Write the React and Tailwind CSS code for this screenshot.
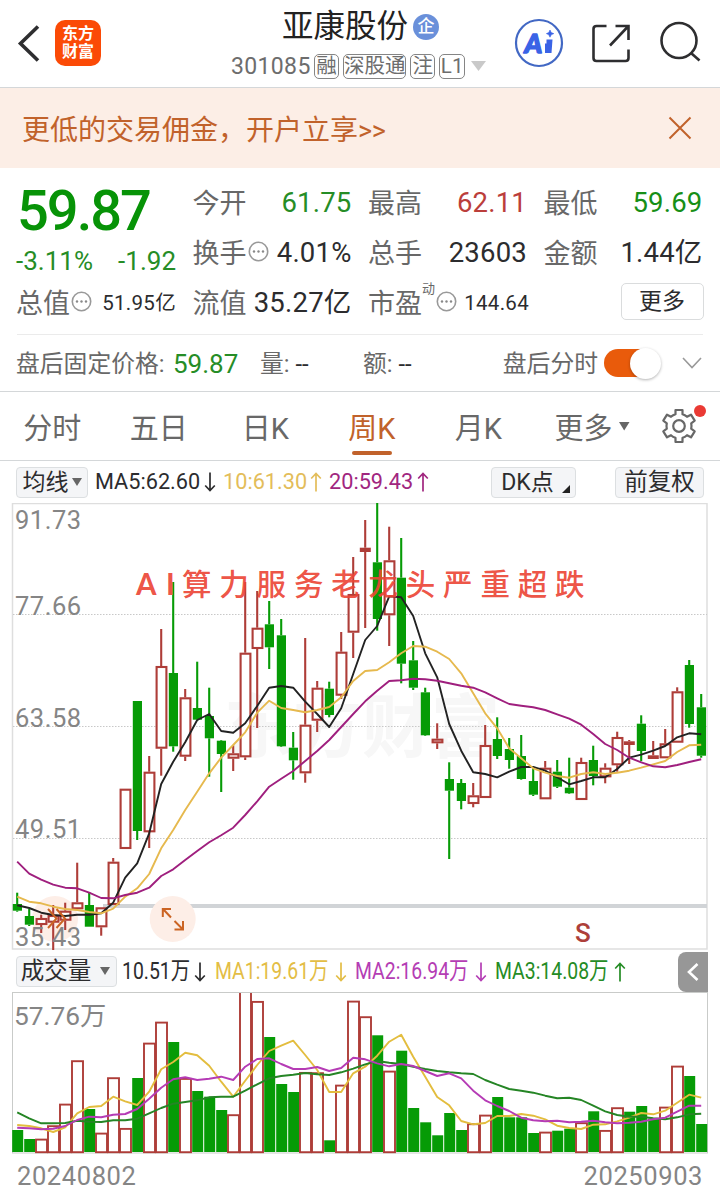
import React, { useState } from "react";
import clsx from "clsx";

// [type, high, body top, body bottom, low], all in chart units
const candles = [
    ["g", 892.7, 904, 910.7, 911.7], ["g", 909, 916, 924.7, 926], ["r", 914.7, 918, 925, 933], ["r", 905, 915, 922.7, 950],
    ["r", 902.7, 910.7, 920.7, 930], ["r", 862.7, 902.3, 909.3, 909.3], ["g", 892, 905, 926.7, 926.7], ["r", 907.3, 907.3, 927.3, 935.7],
    ["r", 858, 861.7, 905, 905], ["r", 788.7, 788.7, 849, 849], ["g", 701, 701, 831, 840], ["r", 756, 771.7, 832.3, 848],
    ["r", 629, 666, 748.7, 775.7], ["g", 582, 673, 746.3, 751.7], ["r", 689, 697.3, 756.7, 761], ["g", 661.7, 708, 719.7, 721],
    ["g", 687.7, 716, 738.3, 776.7], ["g", 740, 740.7, 754, 792], ["r", 745.3, 753.3, 758.7, 771], ["r", 582, 652.7, 757.3, 760],
    ["r", 591, 627.7, 649, 728], ["g", 601, 624.3, 647.3, 669], ["g", 619, 635.3, 746.3, 747], ["g", 732, 747.7, 760.3, 779.7],
    ["r", 638, 724.7, 773.3, 782.7], ["r", 681, 687.7, 720.7, 732], ["g", 681.7, 688.7, 715, 717.3], ["r", 632, 651.7, 695.7, 699],
    ["r", 557, 594, 632.7, 658], ["r", 520, 547.7, 552, 628], ["g", 503, 562.3, 619, 630.7], ["r", 526.7, 560.3, 615.3, 646],
    ["g", 538, 577.7, 663.7, 683.3], ["g", 641, 660.3, 687.7, 690], ["g", 687.7, 692.3, 735.3, 736], ["r", 723.3, 738.7, 743.3, 749],
    ["g", 762.3, 779, 790.7, 859], ["g", 779, 783, 801, 809.3], ["r", 783, 795.3, 804, 807.3], ["r", 725, 745, 798, 798],
    ["g", 717.3, 739, 756, 759], ["g", 738, 749, 760, 768.7], ["g", 735, 756, 779, 779.7], ["g", 766.7, 781, 794.7, 796],
    ["r", 761, 767.7, 799.3, 799.3], ["g", 760, 771.7, 786.7, 788], ["g", 757.7, 787.7, 793.3, 794], ["r", 757.7, 762, 800, 800],
    ["g", 745.7, 760, 776, 785.3], ["r", 763.3, 767.7, 777.3, 783.3], ["r", 731.7, 737, 765.3, 771.7], ["r", 740, 741.3, 745, 764],
    ["g", 715.3, 723.7, 751, 761.3], ["r", 741, 755.3, 759, 759], ["r", 729, 743.3, 758.3, 758.3], ["r", 687.3, 691.3, 742.7, 742.7],
    ["g", 660, 665, 724, 727.7], ["g", 694, 707.3, 755.7, 757.7],
];

const ma5 = [905.3, 908, 912.7, 915, 916, 914.7, 914.7, 913.3, 902.7, 877.7, 863.3, 833.3, 784, 761.7, 742.3, 720, 714, 731, 732.7, 723.3, 706, 687.7, 686, 687.7, 701.7, 714, 727, 708.3, 674, 640, 626, 596.3, 597.3, 616, 653.3, 677.3, 724, 750.7, 772.3, 774, 777.3, 771.7, 767, 767, 770.7, 777.3, 784.3, 781, 777.3, 777.3, 769, 757.7, 754.7, 750.7, 746, 737.3, 733.3, 734.3];
const ma10 = [896.7, 901.7, 903.3, 906.7, 909, 910, 912, 913.3, 908.7, 896.7, 888.3, 874, 848.3, 830, 810, 791.7, 773.3, 757.7, 745, 732.3, 712.7, 700.7, 708, 710, 712.3, 710, 707, 697.3, 681, 671, 670, 662.3, 653.3, 646, 646.7, 651.7, 659, 673.3, 693.3, 713.3, 728.3, 748.3, 758.3, 768.3, 772.7, 776, 777.7, 774, 772.3, 774, 772.7, 770.7, 767.7, 764.3, 761, 752, 745.3, 744.7];
const ma20 = [861.7, 873.7, 879.7, 884.7, 887.7, 888.3, 892.7, 898, 898.3, 895, 892.7, 887.7, 876, 869.3, 860, 851, 842.3, 835.3, 827.7, 815, 801.3, 786.7, 778.7, 771, 761, 751, 740, 727, 714, 701.3, 690.7, 681, 680.3, 678.7, 679.3, 680.7, 683.3, 685.7, 687.7, 692.3, 698.3, 704, 705.7, 707.3, 710, 714.3, 718.7, 724.7, 734, 744, 750, 757.7, 762.3, 766.3, 767.3, 765, 762, 759.3];

const volumes = [1130, 1139, 1138.7, 1125.3, 1103.7, 1060.3, 1109, 1132.7, 1077.3, 1128, 1078, 1042.7, 1021.7, 1042, 1078, 1091, 1096.7, 1110, 1114.3, 985, 1001, 1037, 1084, 1092, 1072, 1072.3, 1140.3, 1084.7, 1000.7, 1016.3, 1035.3, 1070.7, 1050.7, 1108, 1122.3, 1135.3, 1113, 1130, 1123.3, 1114.7, 1097, 1117.3, 1117.3, 1133, 1131.7, 1130.7, 1128.7, 1122.3, 1111.3, 1130, 1107.3, 1111.7, 1106, 1118.7, 1106.7, 1065.7, 1076, 1124];
// volume colours do not always follow the candle
const volTypes = "ggrrrrgrrrgrrgrgggrrrgggrrgrrrgrggggggrrggggrggrgrrgggrrgg";
const vol1 = [1125, 1126, 1128.3, 1132, 1127.3, 1113.3, 1107, 1106, 1096.7, 1101.3, 1105, 1091.7, 1069.3, 1062, 1052.7, 1055.3, 1065.7, 1081.7, 1096.7, 1080.7, 1065, 1051, 1045.7, 1040.7, 1055, 1070, 1092, 1092, 1073.3, 1066.7, 1055.7, 1041.7, 1034.7, 1056.7, 1076.7, 1097, 1105.3, 1121, 1124.3, 1123, 1116, 1116, 1114, 1115.7, 1119.3, 1125.7, 1128, 1129, 1124.7, 1124.3, 1121.3, 1117.7, 1113, 1114.3, 1110.7, 1102.7, 1094.7, 1097.7];
const vol2 = [1127.7, 1128.3, 1129.3, 1128.7, 1126, 1120, 1116.7, 1117.3, 1114.7, 1114, 1109, 1098.7, 1087.7, 1079.3, 1077.3, 1080, 1078.7, 1076.7, 1080, 1066.7, 1059, 1058.3, 1064, 1069, 1069, 1067, 1071, 1068, 1057.7, 1059.3, 1063.3, 1066.3, 1064, 1066, 1071, 1076, 1073.3, 1078.3, 1090.7, 1100.3, 1106, 1111, 1117.7, 1120.3, 1121.3, 1120.7, 1122.3, 1121.7, 1120.7, 1122.3, 1123.3, 1122.7, 1121.7, 1119.3, 1117.7, 1111.7, 1105.7, 1105.7];
const vol3 = [1112.3, 1118.3, 1123.3, 1123.3, 1123, 1120.7, 1121.7, 1122, 1120.3, 1120.3, 1118.7, 1113.3, 1108, 1103.7, 1102, 1100.3, 1097.3, 1096.7, 1096.7, 1090.7, 1084.3, 1078.3, 1076, 1074.7, 1073, 1074.3, 1075, 1072.3, 1068.7, 1064.3, 1061, 1062.7, 1064, 1066.7, 1069, 1071, 1072.3, 1073.3, 1074, 1080, 1084.7, 1089, 1090.7, 1092.7, 1095.7, 1098.3, 1097.7, 1100, 1105.7, 1111.3, 1115, 1116.7, 1116.7, 1118.3, 1119.3, 1117.3, 1114.3, 1113.7];

const RED = "#ae3d38";
const GREEN = "#069b06";

const cx = (i) => 17.2 + i * 12;
const toPoints = (list) => list.map((y, i) => `${cx(i)},${y}`).join(" ");

function Line({ data, color }) {
    return <polyline points={toPoints(data)} fill="none" stroke={color} strokeWidth="1.9" strokeLinejoin="round" />;
}

function Arrow({ up }) {
    return (
        <svg width="12" height="20" viewBox="0 0 12 20" fill="none" stroke="currentColor" strokeWidth="1.7" className={clsx("shrink-0", up && "rotate-180")}>
            <path d="M6 0.500V18.500M1.200 13.500L6 18.500L10.800 13.500" />
        </svg>
    );
}

function Dots() {
    return (
        <svg width="21" height="21" viewBox="0 0 21 21" className="shrink-0 relative -top-0.5 ml-px">
            <circle cx="10.5" cy="10.5" r="9.2" fill="none" stroke="#999" strokeWidth="1.6" />
            <circle cx="6" cy="10.5" r="1.2" fill="#888" />
            <circle cx="10.5" cy="10.5" r="1.2" fill="#888" />
            <circle cx="15" cy="10.5" r="1.2" fill="#888" />
        </svg>
    );
}

function Header() {
    return (
        <header className="h-[88px] border-b border-[#d4d7d9] flex items-center">
            <svg width="24" height="40" viewBox="0 0 24 40" className="ml-4 shrink-0" fill="none" stroke="#2e2e30" strokeWidth="3.6">
                <path d="M22 2.500L4.500 19.500L22 36.500" />
            </svg>
            <div className="ml-[15px] w-[46px] h-[46px] rounded-[10px] bg-[#fb4a06] text-white font-bold text-base leading-[18px] flex flex-col items-center justify-center shrink-0 mb-0.5">
                <span>东方</span>
                <span>财富</span>
            </div>
            <div className="ml-[130px] w-[256px] h-full pt-[5px] shrink-0 flex flex-col">
                <div className="h-[43px] pl-[51px] flex items-center gap-[5px] text-[31.5px] text-[#222]">
                    <span className="leading-none whitespace-nowrap">亚康股份</span>
                    <span className="w-[26px] h-[26px] rounded-full bg-[#6a90da] text-white font-medium text-[17px] leading-none flex items-center justify-center">企</span>
                </div>
                <div className="h-[26px] mt-[5px] flex items-center gap-1 text-[#6d6d6d]">
                    <span className="text-[23px] leading-none tracking-[0.35px] w-[79px]">301085</span>
                    {["融", "深股通", "注", "L1"].map((tag) => (
                        <span key={tag} className="h-[25px] min-w-[25px] px-px border border-[#858585] rounded-[5px] text-[20.5px] leading-none flex items-center justify-center whitespace-nowrap">{tag}</span>
                    ))}
                    <svg width="16" height="11" className="ml-0.5 shrink-0"><path d="M0 0H15L7.500 10Z" fill="#c9c9c9" /></svg>
                </div>
            </div>
            <svg width="50" height="50" viewBox="0 0 50 50" className="ml-[27px] mb-px shrink-0">
                <circle cx="25" cy="25" r="23" fill="#fff" stroke="#4268c4" strokeWidth="2.2" />
                <text x="10.500" y="34.500" fontSize="27" fontWeight="900" fontStyle="italic" fill="#3a63e6" stroke="#3a63e6" strokeWidth="1.4" strokeLinejoin="round" fontFamily="Lato">A</text>
                <path d="M32.500 21.500H38.500L37.500 35H31V25.500H32.500Z" fill="#3a63e6" />
                <path d="M36 12L37.2 14.600L39.800 15.600L37.200 16.800L36 19.200L34.800 16.800L32.400 15.600L34.800 14.600Z" fill="#3a63e6" stroke="#3a63e6" strokeWidth="0.600" />
            </svg>
            <svg width="42" height="42" viewBox="0 0 42 42" className="ml-[26px] mb-0.5 shrink-0" fill="none" stroke="#2e2e30" strokeWidth="2.6">
                <path d="M16.5 4H6.5Q3.5 4 3.5 7V36Q3.5 39 6.5 39H35.5Q38.5 39 38.5 36V27.500" />
                <path d="M25.500 4H38.500V18M38 4.500L20 23.500" />
            </svg>
            <svg width="44" height="44" viewBox="0 0 44 44" className="ml-[26px] mb-1 shrink-0" fill="none" stroke="#2e2e30" strokeWidth="2.6">
                <circle cx="21" cy="20.500" r="17.500" />
                <path d="M33 33L41.500 40.500" />
            </svg>
        </header>
    );
}

function Banner() {
    return (
        <div className="h-20 bg-[#fceee6] pl-[22px] pr-[28px] pt-1 flex items-center justify-between text-[#c1622b]">
            <span className="text-[28px] leading-none whitespace-nowrap relative top-px">更低的交易佣金，开户立享<span className="tracking-[-0.5px] text-[27px]">&gt;&gt;</span></span>
            <svg width="24" height="24" viewBox="0 0 24 24" className="mb-1" stroke="currentColor" strokeWidth="2"><path d="M1.500 1.500L22.500 22.500M22.500 1.500L1.500 22.500" /></svg>
        </div>
    );
}

function Stat({ label, value, color, small, icon, sup }) {
    return (
        <div className="flex items-center whitespace-nowrap text-[27px] leading-none text-[#686868]">
            <span className="-ml-px pt-0.5">{label}</span>
            {sup && <span className="text-[13px] self-start mt-1">{sup}</span>}
            {icon && <Dots />}
            <span className={clsx("ml-auto", small ? "text-[20.5px] tracking-[0.3px]" : "text-[27.500px] tracking-[0.200px]", sup && "-mr-0.5", color || "text-[#2c2c2e]")}>{value}</span>
        </div>
    );
}

function Quote() {
    return (
        <section className="mx-[17px] h-[167px] pt-[10px] border-b border-[#ebebeb] grid grid-cols-[159px_158px_158px_158px] grid-rows-[50px_50px_50px] gap-x-[17.5px]">
            <div className="row-span-2 flex flex-col text-[#079307]">
                <span className="text-[56px] font-medium leading-[66px] tracking-[-2px]">59.87</span>
                <div className="flex justify-between text-[26px] leading-[34px] -ml-px">
                    <span className="text-[#268d26]">-3.11%</span>
                    <span className="text-[#268d26]">-1.92</span>
                </div>
            </div>
            <Stat label="今开" value="61.75" color="text-[#268d26]" />
            <Stat label="最高" value="62.11" color="text-[#bb3e3b]" />
            <Stat label="最低" value="59.69" color="text-[#178f17]" />
            <Stat label="换手" value="4.01%" icon />
            <Stat label="总手" value="23603" />
            <Stat label="金额" value="1.44亿" />
            <Stat label="总值" value="51.95亿" icon small />
            <Stat label="流值" value="35.27亿" />
            <Stat label="市盈" value="144.64" sup="动" icon small />
            <button className="ml-auto -mr-px self-center relative -top-0.5 w-[83px] h-[37px] border border-[#dadcdd] rounded-[5px] text-[23px] leading-none text-[#2c2c2e]">更多</button>
        </section>
    );
}

function AfterHours() {
    const [on, setOn] = useState(true);
    return (
        <div className="h-[57px] pl-4 pr-[18px] border-b border-[#d4d7d9] flex items-center text-[23.800px] leading-none text-[#686868] whitespace-nowrap">
            <span className="w-[157px] pt-1">盘后固定价格:</span>
            <span className="w-[87px] pt-0.5 text-[26px] text-[#268d26]">59.87</span>
            <span className="w-[103px] pt-1">量: <span className="text-[#2c2c2e]">--</span></span>
            <span className="pt-1">额: <span className="text-[#2c2c2e]">--</span></span>
            <span className="ml-auto pt-1">盘后分时</span>
            <button
                className={clsx("ml-1.5 w-[56px] h-[28px] rounded-full flex items-center", on ? "bg-[#e95b0b] justify-end" : "bg-gray-300")}
                onClick={() => setOn(!on)}
            >
                <span className="w-[31px] h-[31px] rounded-full bg-white shadow-[0_1px_3px_rgba(0,0,0,0.3)] -mr-px"></span>
            </button>
            <svg width="20" height="12" viewBox="0 0 20 12" className="ml-[22px]" fill="none" stroke="#999" strokeWidth="1.6"><path d="M1 1L10 10.500L19 1" /></svg>
        </div>
    );
}

function Tabs() {
    const [tab, setTab] = useState("周K");
    return (
        <nav className="h-[69px] border-b border-[#d4d7d9] flex items-center text-[29px] leading-none text-[#686868]">
            {["分时", "五日", "日K", "周K", "月K"].map((name) => (
                <button
                    key={name}
                    className={clsx("w-[106.5px] h-full pt-[23px] pr-0.5 flex flex-col items-center", tab === name && "text-[#c1622b]")}
                    onClick={() => setTab(name)}
                >
                    <span>{name}</span>
                    {tab === name && <span className="mt-[7px] w-10 h-1 rounded-full bg-[#c1622b]"></span>}
                </button>
            ))}
            <span className="ml-[22px] pt-1.5">更多</span>
            <svg width="11" height="9" className="ml-1.5"><path d="M0 0H10.500L5.200 8.500Z" fill="#666" /></svg>
            <div className="ml-[31px] relative">
                <svg width="36" height="36" viewBox="0 0 36 36" fill="none" stroke="#686868" strokeWidth="2.2" strokeLinejoin="round">
                    <path d="M14.500 2H21.500V6.300Q24 7 26 8.800L30 6.700L33.700 12.700L30.200 15.300Q30.800 18 30.200 20.700L33.700 23.300L30 29.300L26 27.200Q24 29 21.500 29.700V34H14.500V29.700Q12 29 10 27.200L6 29.300L2.300 23.300L5.800 20.700Q5.200 18 5.800 15.300L2.300 12.700L6 6.700L10 8.800Q12 7 14.500 6.300Z" />
                    <circle cx="18" cy="18" r="5.800" />
                </svg>
                <span className="absolute -top-[3px] left-[33px] w-3 h-3 rounded-full bg-[#ea3a34]"></span>
            </div>
        </nav>
    );
}

function MaBar() {
    return (
        <div className="h-[42px] pl-4 pr-4 flex items-center text-[21.700px] leading-none text-[#2c2c2e] whitespace-nowrap">
            <button className="w-[72px] h-[31px] border border-[#dcdfe1] rounded bg-[#f4f5f7] text-[23px] leading-none flex items-center justify-center gap-[3px]">
                <span className="pt-px">均线</span>
                <svg width="10" height="9"><path d="M0 0H10L5 8Z" fill="#666" /></svg>
            </button>
            <span className="ml-[7px] w-[109px]">MA5:62.60</span>
            <Arrow />
            <span className="ml-[7px] w-[87px] text-[#e3bd5a]">10:61.30</span>
            <span className="text-[#e3bd5a]"><Arrow up /></span>
            <span className="ml-[7px] w-[88px] text-[#a1267f]">20:59.43</span>
            <span className="text-[#a1267f]"><Arrow up /></span>
            <button className="ml-auto w-[85px] h-[31px] border border-[#dcdfe1] rounded bg-[#f4f5f7] text-[23px] leading-none flex items-center justify-center gap-2 pl-1">
                <span className="pt-px">DK点</span>
                <svg width="8" height="8" className="mt-3.5"><path d="M8 0V8H0Z" fill="#222" /></svg>
            </button>
            <button className="ml-[39px] w-[89px] h-[31px] pt-0.5 border border-[#dcdfe1] rounded bg-[#f4f5f7] text-[23.500px] leading-none">前复权</button>
        </div>
    );
}

function Candle({ item, x }) {
    const [type, high, top, bottom, low] = item;
    const color = type === "r" ? RED : GREEN;
    const hollow = type === "r" && bottom - top > 4.5;
    return (
        <g stroke={color} strokeWidth="2.1">
            {high < top && <path d={`M${x} ${high}V${top}`} />}
            {low > bottom && <path d={`M${x} ${bottom}V${low}`} />}
            {hollow
                ? <rect x={x - 4.6} y={top + 1} width="9.800" height={bottom - top - 2} fill="#fff" />
                : <rect x={x - (type === "r" ? 5.4 : 4.4)} y={top} width={type === "r" ? 11 : 9.2} height={bottom - top} fill={color} stroke="none" />}
        </g>
    );
}

function PriceChart() {
    return (
        <svg width="720" height="448" viewBox="0 503 720 448" className="block">
            <g fill="#f7f7f7" fontWeight="700" fontSize="69">
                <text x="224" y="752">东方财富</text>
            </g>
            <rect x="12.500" y="503.500" width="694.500" height="445.500" fill="none" stroke="#dedede" strokeWidth="1.500" />
            {[614.5, 726.5, 838.5].map((y) => (
                <path key={y} d={`M13 ${y}H707`} stroke="#c8c8c8" strokeDasharray="1.500 1.500" />
            ))}
            <path d="M103 906H707" stroke="#d1d4d7" strokeWidth="4" />
            <circle cx="55" cy="919" r="23" fill="#fdeee7" />
            <circle cx="172.700" cy="919" r="23" fill="#fdeee7" />
            {candles.map((item, i) => <Candle key={i} item={item} x={cx(i)} />)}
            <Line data={ma5} color="#222" />
            <Line data={ma10} color="#e6b94e" />
            <Line data={ma20} color="#9f1f7e" />
            <g fill="none" stroke="#cb6424" strokeWidth="2">
                <path d="M48 909L56.500 918.500L48 928M56.500 909L65 918.500L56.500 928" />
                <path d="M162.800 917V909H171M163 909L171 917.500M174.500 929.500H183V921M183 929.500L174.500 921" />
            </g>
            <g fill="#858585" fontSize="25.500" letterSpacing="0.500">
                <text x="15" y="529">91.73</text>
                <text x="15" y="615">77.66</text>
                <text x="15" y="727">63.58</text>
                <text x="15" y="838">49.51</text>
                <text x="15" y="946">35.43</text>
            </g>
            <text x="575" y="942" fontSize="26" fontWeight="500" fill="#ad3f3a">S</text>
            <g fill="#ec4536" fillOpacity="0.930" fontSize="29.500" fontWeight="500">
                <text x="136" y="594.500" letterSpacing="9.500" fontWeight="700" fontFamily="Lato">AI</text>
                <text x="182" y="594.500" letterSpacing="7.800">算力服务老龙头严重超跌</text>
            </g>
        </svg>
    );
}

function VolItem({ text, up, className }) {
    return (
        <div className={clsx("flex items-center shrink-0", className)}>
            <span className="grow w-0"><span className="inline-block origin-left scale-x-[0.825]">{text}</span></span>
            <Arrow up={up} />
        </div>
    );
}

function VolumeBar() {
    return (
        <div className="h-[41px] pl-4 pr-3 flex items-center text-[23.500px] leading-none text-[#2c2c2e] whitespace-nowrap">
            <button className="w-[101px] h-[31px] border border-[#dcdfe1] rounded bg-[#f4f5f7] text-[23.500px] leading-none flex items-center justify-center gap-[9px] pr-0.5">
                <span className="pt-px">成交量</span>
                <svg width="10" height="9"><path d="M0 0H10L5 8Z" fill="#666" /></svg>
            </button>
            <VolItem text="10.51万" className="ml-[5px] w-[84px]" />
            <VolItem text="MA1:19.61万" className="ml-[9px] w-[132px] text-[#e3bd45]" />
            <VolItem text="MA2:16.94万" className="ml-2 w-[132px] text-[#b43db4]" />
            <VolItem text="MA3:14.08万" up className="ml-2 w-[131px] text-[#258c25]" />
            <button className="ml-auto w-[30px] h-10 rounded-l-lg bg-[#979797] flex items-center justify-center">
                <svg width="12" height="18" viewBox="0 0 12 18" fill="none" stroke="#fff" strokeWidth="2.600"><path d="M10.500 1L2 9L10.500 17" /></svg>
            </button>
        </div>
    );
}

function VolumeChart() {
    return (
        <svg width="720" height="163" viewBox="0 992 720 163" className="block">
            <defs>
                <clipPath id="vol"><rect x="12" y="993" width="697" height="161" /></clipPath>
            </defs>
            <rect x="12.500" y="992.500" width="695" height="160.500" fill="none" stroke="#c9cbc9" />
            <g clipPath="url(#vol)">
                {volumes.map((y, i) => volTypes[i] === "r"
                    ? <rect key={i} x={cx(i) - 5.2} y={y + 0.9} width="11" height={1151.3 - y} fill="#fff" stroke={RED} strokeWidth="1.900" />
                    : <rect key={i} x={cx(i) - 5} y={y} width="11" height={1152 - y} fill={GREEN} />
                )}
                <Line data={vol1} color="#e3bd3e" />
                <Line data={vol3} color="#258525" />
                <Line data={vol2} color="#b53bb5" />
            </g>
            <text x="14" y="1025" fontSize="26.300" fill="#858585">57.76万</text>
        </svg>
    );
}

function App() {
    return (
        <div className="w-[720px] h-[1203px] overflow-hidden bg-white font-['Roboto','Noto_Sans_CJK_SC',sans-serif]">
            <Header />
            <Banner />
            <Quote />
            <AfterHours />
            <Tabs />
            <MaBar />
            <PriceChart />
            <VolumeBar />
            <VolumeChart />
            <div className="px-[17px] pt-[7px] flex justify-between text-[25.500px] leading-[28px] tracking-[0.600px] text-[#858585]">
                <span>20240802</span>
                <span>20250903</span>
            </div>
        </div>
    );
}

export default App;
